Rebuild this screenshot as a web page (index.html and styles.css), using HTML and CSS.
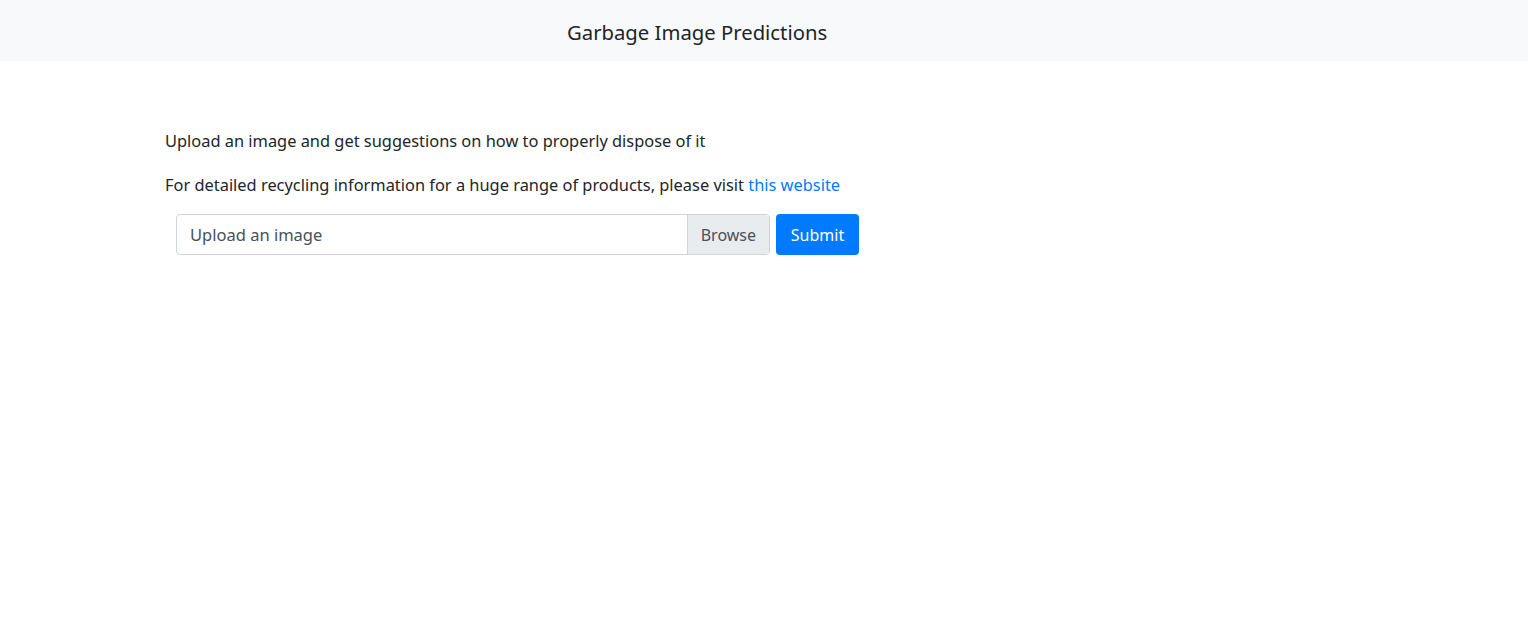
FILE: index.html
```html
<!DOCTYPE html>
<html lang="en">
<head>
<meta charset="utf-8">
<title>Garbage Image Predictions</title>
<link rel="stylesheet" href="styles.css">
</head>
<body>
<nav class="navbar">
  <span class="brand">Garbage Image Predictions</span>
</nav>
<main class="content">
  <p class="lead-text">Upload an image and get suggestions on how to properly dispose of it</p>
  <p class="lead-text">For detailed recycling information for a huge range of products, please visit <a href="#" class="link">this website</a></p>
  <form class="upload-form">
    <div class="file-input">
      <span class="file-label">Upload an image</span>
      <span class="browse">Browse</span>
    </div>
    <button type="button" class="btn-submit">Submit</button>
  </form>
</main>
</body>
</html>
```
FILE: styles.css
```css
* { box-sizing: border-box; }
html, body { margin: 0; padding: 0; }
body {
  font-family: "Noto Sans", "Open Sans", sans-serif;
  font-size: 16.4px;
  color: #212529;
  background: #fff;
}
.navbar {
  height: 61px;
  background: #f8f9fa;
  display: flex;
  align-items: center;
  padding-left: 567px;
}
.brand {
  font-size: 20.3px;
  color: #212529;
  line-height: 1;
  padding-top: 4px;
}
.content {
  padding: 68px 0 0 165px;
}
.lead-text {
  margin: 0 0 20px 0;
  line-height: 24px;
}
.link { color: #007bff; text-decoration: none; }
.upload-form {
  display: flex;
  gap: 6px;
  margin-left: 11px;
  margin-top: -3px;
}
.file-input {
  width: 594px;
  height: 41px;
  border: 1px solid #ced4da;
  border-radius: 4px;
  display: flex;
  align-items: center;
  overflow: hidden;
}
.file-label {
  flex: 1;
  padding-left: 13px;
  color: #495057;
  font-size: 16.5px;
}
.browse {
  height: 100%;
  display: flex;
  align-items: center;
  padding: 0 13px;
  background: #e9ecef;
  border-left: 1px solid #ced4da;
  color: #495057;
  font-size: 16px;
}
.btn-submit {
  height: 41px;
  width: 83px;
  border: none;
  border-radius: 4px;
  background: #007bff;
  color: #fff;
  font-family: inherit;
  font-size: 16px;
  padding: 0;
}
```
